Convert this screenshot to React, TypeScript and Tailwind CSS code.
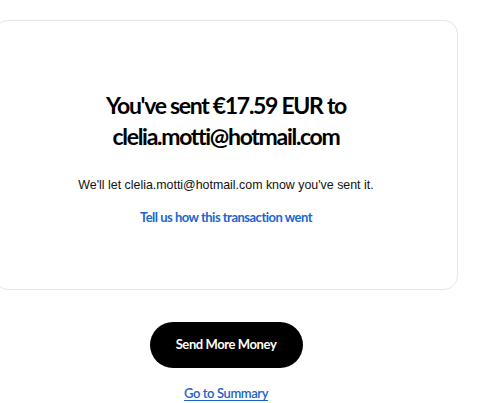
import React from 'react';

export default function App() {
  return (
    <div className="min-h-screen bg-white flex flex-col font-['Lato','Noto_Sans',sans-serif]">
      {/* Confirmation card */}
      <div className="ml-[-6px] mt-[20px] w-[464px] h-[270px] rounded-[14px] border border-[#e6e6e6] bg-white flex flex-col items-center pt-[69px]">
        <h1 className="text-center text-[23px] leading-[31px] font-bold tracking-[-1.3px] text-black">
          You've sent €17.59 EUR to
          <br />
          clelia.motti@hotmail.com
        </h1>
        <p className="mt-[24px] text-[12.4px] leading-[18px] text-[#111] font-['Liberation_Sans',Arial,sans-serif]">
          We'll let clelia.motti@hotmail.com know you've sent it.
        </p>
        <a href="#" className="mt-[14px] text-[13px] leading-[18px] font-bold tracking-[-0.5px] text-[#1a66d2]">
          Tell us how this transaction went
        </a>
      </div>

      {/* Actions */}
      <div className="ml-[-6px] w-[464px] flex flex-col items-center">
        <button className="mt-[32px] h-[46px] w-[153px] rounded-full bg-black text-white text-[13px] font-bold tracking-[-0.4px]">
          Send More Money
        </button>
        <a
          href="#"
          className="mt-[16px] text-[13px] leading-[18px] font-semibold tracking-[-0.4px] text-[#1d63c9] underline underline-offset-2"
        >
          Go to Summary
        </a>
      </div>
    </div>
  );
}
